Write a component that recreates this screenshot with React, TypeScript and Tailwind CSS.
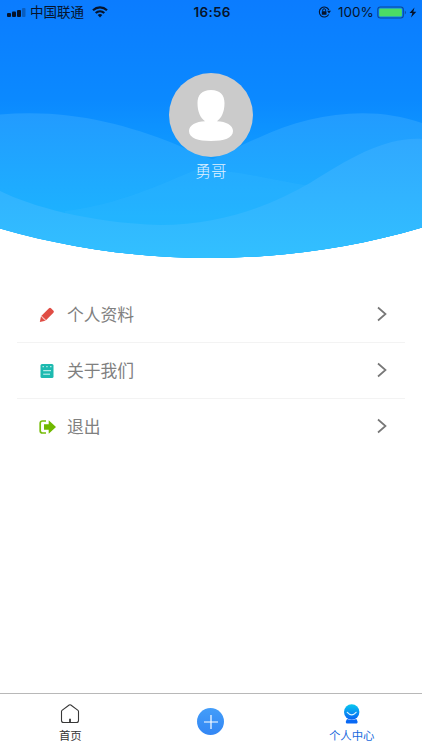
import type { ReactNode } from "react";

function HeaderWaves() {
  return (
    <svg className="absolute inset-0 h-[260px] w-full" viewBox="0 0 422 260" preserveAspectRatio="none">
      <defs>
        <linearGradient id="sky" x1="0" y1="0" x2="0" y2="260" gradientUnits="userSpaceOnUse">
          <stop offset="0" stopColor="#0b7cff" />
          <stop offset="0.38" stopColor="#0b89ff" />
          <stop offset="0.75" stopColor="#12a8ff" />
          <stop offset="1" stopColor="#18b8ff" />
        </linearGradient>
        <linearGradient id="back" x1="0" y1="113" x2="0" y2="225" gradientUnits="userSpaceOnUse">
          <stop offset="0" stopColor="#229bff" />
          <stop offset="1" stopColor="#1cb4ff" />
        </linearGradient>
        <linearGradient id="front" x1="0" y1="138" x2="0" y2="258" gradientUnits="userSpaceOnUse">
          <stop offset="0" stopColor="#30a8ff" />
          <stop offset="1" stopColor="#32c0ff" />
        </linearGradient>
        <clipPath id="bowl">
          <path d="M0 0H422V227.500C285 268 137 268 0 228.500Z" />
        </clipPath>
      </defs>
      <g clipPath="url(#bowl)">
        <rect width="422" height="260" fill="url(#sky)" />
        <path d="M0 114.500C65 109 120 122 175 144C220 164 262 177 310 186L422 220V260H0Z" fill="url(#back)" />
        <path d="M65 211C108 206 145 192 184 173C212 160 237 147 258 138C310 113 371 105 422 123V260H65Z" fill="url(#back)" />
        <path d="M65 211C108 206 145 192 195 170C235 169 260 178 310 186V260H65Z" fill="#3bbcff" fillOpacity="0.22" />
        <path d="M0 191C30 206 90 223 160 225C225 225 275 203 310 183C350 158 385 137 422 139V260H0Z" fill="url(#front)" />
      </g>
    </svg>
  );
}

function StatusBar() {
  return (
    <div className="relative flex h-6 items-center text-[#06142c]">
      <svg className="ml-[7px] h-[9px] w-[19px]" viewBox="0 0 19 9">
        <rect x="0" y="5" width="4" height="4" rx="1" fill="currentColor" />
        <rect x="5" y="3.500" width="4" height="5.500" rx="1" fill="currentColor" />
        <rect x="10" y="2" width="4" height="7" rx="1" fill="currentColor" />
        <rect x="15" y="0" width="3.500" height="9" rx="1" fill="currentColor" opacity="0.3" />
      </svg>
      <span className="ml-[4px] pb-[2px] text-[13.5px] leading-[22px]">中国联通</span>
      <svg className="ml-[8px] h-[12px] w-[16px]" viewBox="0 0 16 12" fill="none" stroke="currentColor" strokeWidth="2.200">
        <path d="M1 4.300C5 .5 11 .5 15 4.300M3.700 7C6.200 4.700 9.800 4.700 12.300 7" />
        <path d="M5.700 9C7 7.700 9 7.700 10.300 9L8 11.500Z" fill="currentColor" stroke="none" />
      </svg>
      <span className="absolute left-[193.500px] font-[Inter] text-[13.5px] leading-6 font-semibold tracking-[0.300px]">16:56</span>
      <svg className="mr-[7px] ml-auto h-[12px] w-[13px]" viewBox="0 0 13 12" fill="none" stroke="currentColor">
        <path d="M10.900 4A5 5 0 1 0 10.700 8.500" strokeWidth="1.100" />
        <path d="M9 4.700H13L11 7.500Z" fill="currentColor" stroke="none" />
        <rect x="3.800" y="5.300" width="4.700" height="3.500" rx=".4" fill="currentColor" stroke="none" />
        <path d="M4.700 5.500V4.200A1.450 1.450 0 0 1 7.600 4.200V5.500" />
      </svg>
      <span className="mr-[3px] w-[36px] font-[Inter] text-[13.5px] leading-6 whitespace-nowrap">100%</span>
      <svg className="mr-[5px] h-[13px] w-[40px]" viewBox="0 0 40 13">
        <rect x=".8" y="1" width="25.500" height="11" rx="2.500" fill="none" stroke="#0c4999" strokeWidth="1.100" />
        <rect x="2.200" y="2.400" width="22.700" height="8.200" rx="1" fill="#4bdc65" />
        <path d="M27.800 4.500Q30 6.500 27.800 8.500Z" fill="#0c4999" />
        <path d="M37.500 1.500L32.500 7.100H35.300L34 11.500L39.300 5.700H36.300Z" fill="currentColor" />
      </svg>
    </div>
  );
}

function Avatar() {
  return (
    <svg className="mt-[49px] size-[84px]" viewBox="0 0 84 84">
      <circle cx="42" cy="42" r="42" fill="#cbcbcb" />
      <path d="M42 17C33 17 28.500 22 28.500 30C28.500 39 31.500 45 36 48.200C27 48.500 20 52 20 58C20 65 29 68 42 68S64 65 64 58C64 52 57 48.500 48 48.200C52.500 45 55.500 39 55.500 30C55.500 22 51 17 42 17Z" fill="white" />
    </svg>
  );
}

const PencilIcon = (
  <svg className="size-4" viewBox="0 0 16 16">
    <path d="M.8 15L2 9.300L10 1.300Q11 .3 12 1.300L14.500 3.800Q15.400 4.800 14.400 5.800L6.500 13.800Z" fill="#e04d44" />
    <path d="M2.100 9.500L3.700 10L4.300 11.700L6 12.200L6.400 13.800" fill="none" stroke="white" strokeWidth=".8" />
  </svg>
);

const NoteIcon = (
  <svg className="size-4" viewBox="0 0 16 16">
    <rect x="1.500" y="1" width="13" height="14" rx="1.500" fill="#1dbab0" />
    <path d="M3.500 3.700H5M7.200 3.700H8.700M11 3.700H12.500M4.200 7.700H12M4.200 11.200H11" stroke="#d5f5f2" strokeWidth="1" />
  </svg>
);

const ExitIcon = (
  <svg className="h-4 w-[18px]" viewBox="0 0 18 16">
    <path d="M7 2H3.500Q1.200 2 1.200 4.300V11.700Q1.200 14 3.500 14H7" fill="none" stroke="#77bd0c" strokeWidth="1.700" />
    <path d="M5 5.200H9.700V1.200L17 8L9.700 14.800V10.800H5Z" fill="#70b900" />
  </svg>
);

function MenuRow({ icon, label, last = false }: { icon: ReactNode; label: string; last?: boolean }) {
  return (
    <button className={`flex h-[56px] w-full items-center pl-[22px] text-left ${last ? "" : "border-b border-[#f3f3f3]"}`}>
      <span className="flex w-[28px]">{icon}</span>
      <span className="pb-[2px] text-[16.8px] leading-[22px] text-[#808080]">{label}</span>
      <svg className="mr-[18px] mb-[2px] ml-auto h-[16px] w-[10px]" viewBox="0 0 10 16" fill="none" stroke="#777" strokeWidth="1.700">
        <path d="M1 1.500L8.500 8L1 14.500" />
      </svg>
    </button>
  );
}

function TabBar() {
  return (
    <nav className="mt-auto grid h-[57px] grid-cols-3 border-t border-[#b8b8b8] text-[11.4px] leading-4">
      <button className="flex flex-col items-center pt-[10px] text-[#333]">
        <svg className="h-[20px] w-[20px]" viewBox="0 0 20 20" fill="none" stroke="#383838" strokeWidth="1.100">
          <path d="M1.500 7.500Q1.500 6.800 2 6.400L9.200 1Q10 .4 10.800 1L18 6.400Q18.500 6.800 18.500 7.500V16.500Q18.500 18.500 16.500 18.500H3.500Q1.500 18.500 1.500 16.500Z" />
          <path d="M10 14.800V18.500" strokeWidth="1.800" />
        </svg>
        <span className="mt-[3px]">首页</span>
      </button>
      <button className="flex justify-center pt-[14px]">
        <span className="flex size-[27px] items-center justify-center rounded-full bg-linear-to-b from-[#439df9] to-[#3386f4]">
          <svg className="size-[14px]" viewBox="0 0 14 14" stroke="white" strokeWidth="1.200">
            <path d="M7 0V14M0 7H14" />
          </svg>
        </span>
      </button>
      <button className="flex flex-col items-center pt-[10px] text-[#1768dd]">
        <svg className="size-[20px]" viewBox="0 0 20 20">
          <defs>
            <linearGradient id="person" x1="0" y1="0" x2="0" y2="1">
              <stop stopColor="#08c8ef" />
              <stop offset="1" stopColor="#0862f4" />
            </linearGradient>
          </defs>
          <circle cx="9.700" cy="8" r="7.700" fill="url(#person)" />
          <path d="M5 15Q9.700 17.200 14.400 15L15.500 17.200Q16 19.500 13.800 19.500H5.600Q3.400 19.500 3.900 17.200Z" fill="#0869f5" />
          <path d="M5.300 8.300Q9.700 13.300 14.100 8.300" fill="none" stroke="#d8f4ff" strokeWidth="1.200" strokeLinecap="round" />
        </svg>
        <span className="mt-[3px]">个人中心</span>
      </button>
    </nav>
  );
}

export default function App() {
  return (
    <main className="flex h-[750px] w-full flex-col overflow-hidden bg-white font-['Noto_Sans_CJK_SC',sans-serif]">
      <header className="relative h-[260px] shrink-0">
        <HeaderWaves />
        <StatusBar />
        <div className="relative flex flex-col items-center">
          <Avatar />
          <h1 className="mt-px text-[15.5px] leading-6 font-light text-[#e0f2ff]">勇哥</h1>
        </div>
      </header>
      <section className="mx-[17px] mt-[27px]">
        <MenuRow icon={PencilIcon} label="个人资料" />
        <MenuRow icon={NoteIcon} label="关于我们" />
        <MenuRow icon={ExitIcon} label="退出" last />
      </section>
      <TabBar />
    </main>
  );
}
